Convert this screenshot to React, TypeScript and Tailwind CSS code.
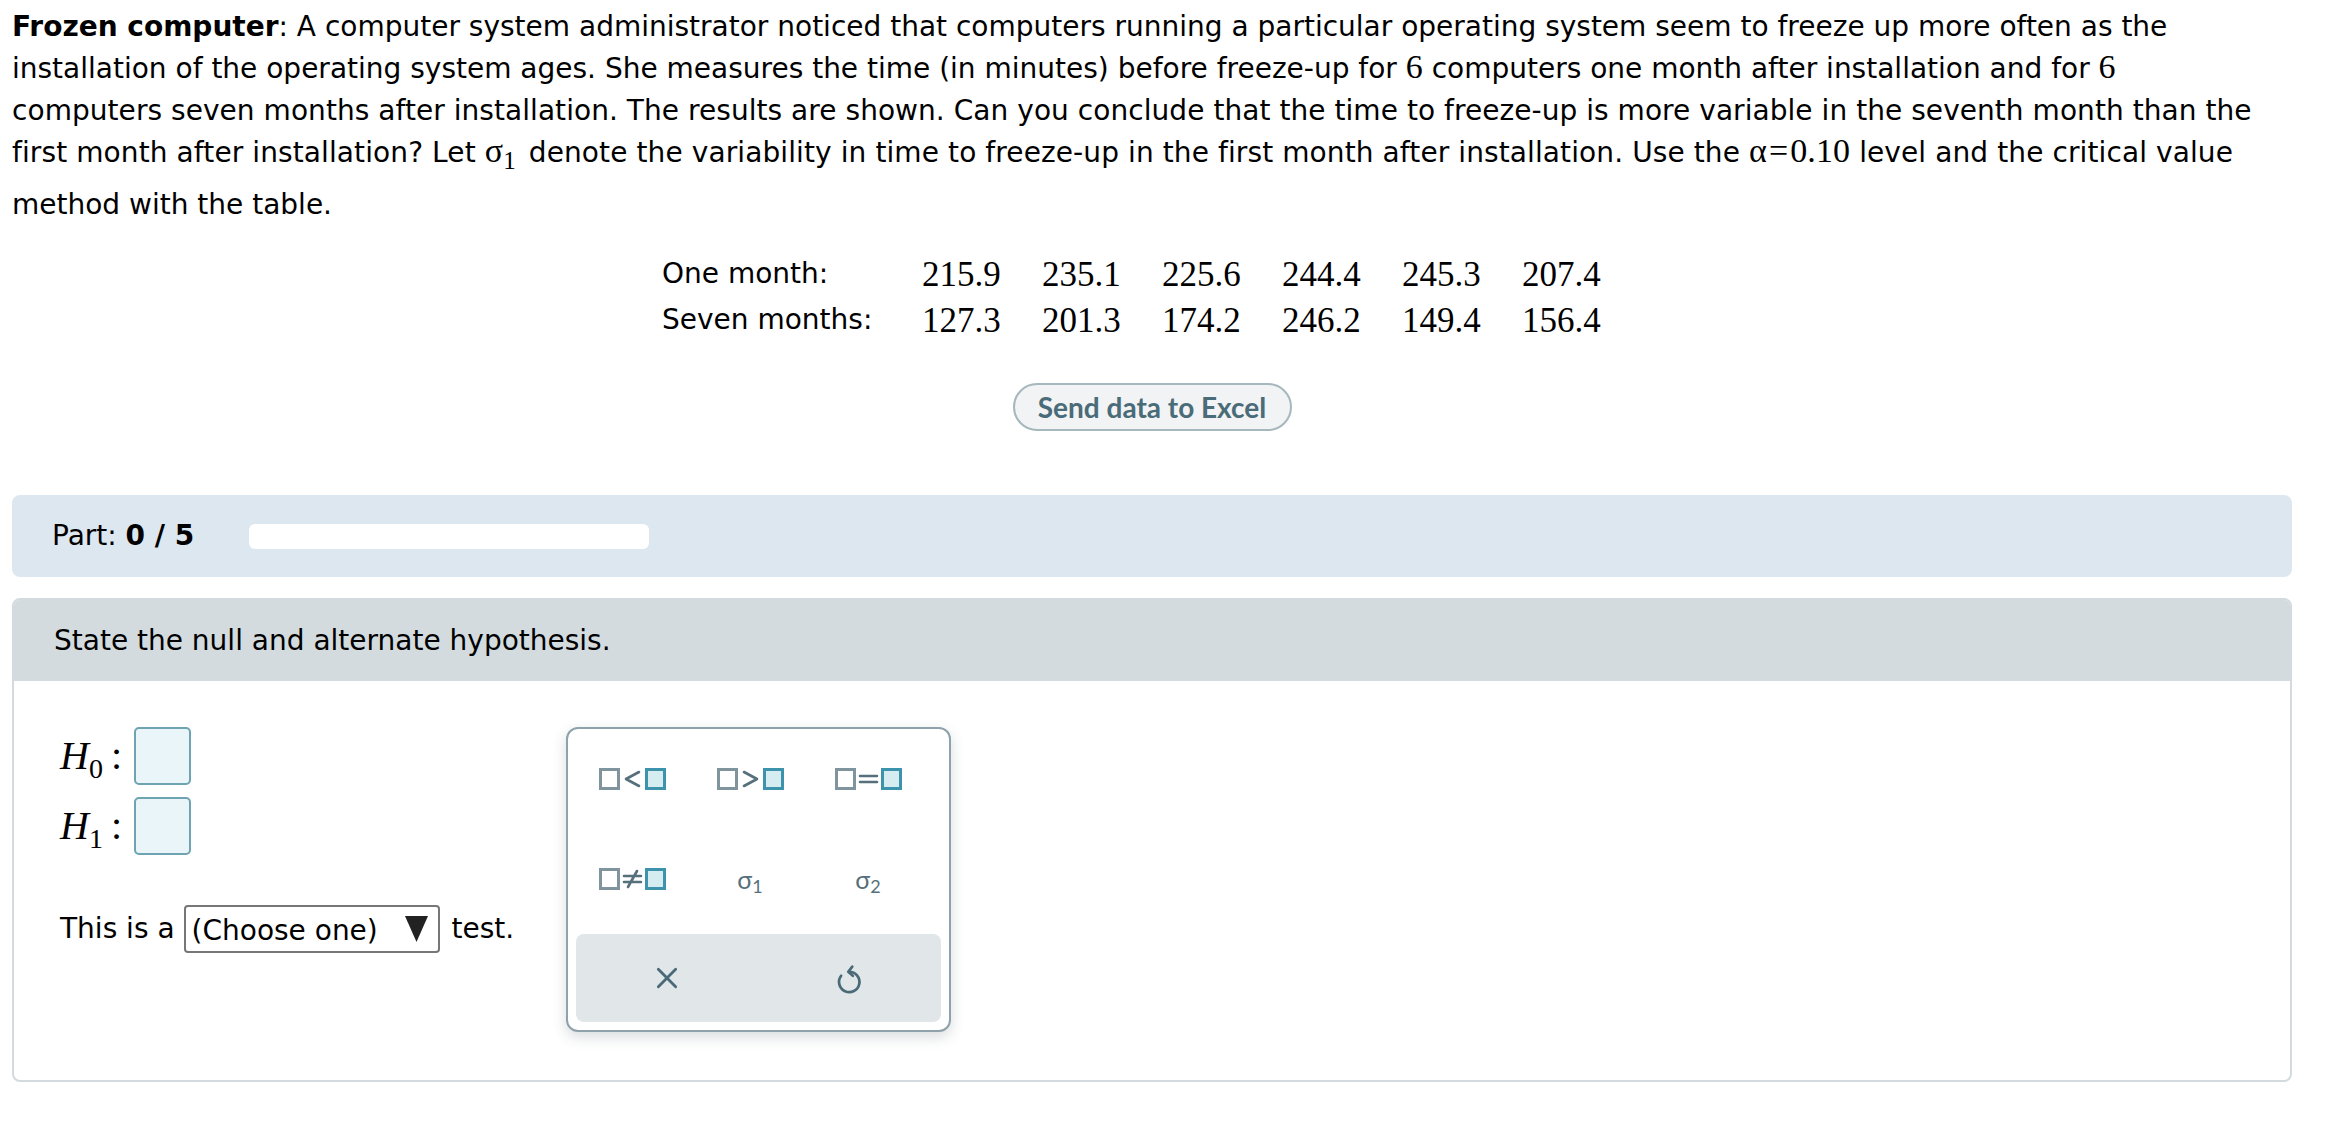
import React from "react";

const serif = "font-['Liberation_Serif','Times_New_Roman',serif]";

function OpIcon({ op }: { op: string }) {
  const c = "#56707b";
  let d = "";
  if (op === "<") d = "M17 4L4 11L17 18";
  if (op === ">") d = "M4 4L17 11L4 18";
  if (op === "=") d = "M2 8H19M2 14H19";
  if (op === "≠") d = "M2 8H19M2 14H19M15 3L6 19";
  return (
    <svg width="21" height="22" viewBox="0 0 21 22" fill="none" stroke={c} strokeWidth="2.6" strokeLinecap="round" strokeLinejoin="round">
      <path d={d} />
    </svg>
  );
}

function Rel({ op }: { op: string }) {
  return (
    <span className="flex items-center gap-[2px]">
      <span className="block w-[21px] h-[22px] border-[3px] border-[#7f949d] bg-white" />
      <OpIcon op={op} />
      <span className="block w-[21px] h-[22px] border-[3px] border-[#3d93ab] bg-[#d5ecf1]" />
    </span>
  );
}

function Sigma({ n }: { n: string }) {
  return (
    <span className="text-[#56707b] font-['Lato',sans-serif] text-[25px] leading-none">
      σ<sub className="text-[18px] relative top-[4px] align-baseline">{n}</sub>
    </span>
  );
}

function HLabel({ n }: { n: string }) {
  return (
    <span className={`${serif} italic text-[40px] leading-none w-[74px] whitespace-nowrap`}>
      H<sub className="not-italic text-[28px] relative top-[9px] align-baseline">{n}</sub>
      <span className="not-italic">&thinsp;:</span>
    </span>
  );
}

export default function App() {
  const one = ["215.9", "235.1", "225.6", "244.4", "245.3", "207.4"];
  const seven = ["127.3", "201.3", "174.2", "246.2", "149.4", "156.4"];
  return (
    <div className="min-h-[1122px] bg-white text-black font-['DejaVu_Sans','Verdana',sans-serif] text-[28px]">
      <div className="w-[2280px] ml-[12px]">
        {/* Problem statement */}
        <div className="pt-[6px] whitespace-nowrap">
          <div className="h-[42px] leading-[42px]">
            <b>Frozen computer</b>: A computer system administrator noticed that computers running a particular operating system seem to freeze up more often as the
          </div>
          <div className="h-[42px] leading-[42px]">
            installation of the operating system ages. She measures the time (in minutes) before freeze-up for{" "}
            <span className={`${serif} text-[34px] leading-none`}>6</span> computers one month after installation and for{" "}
            <span className={`${serif} text-[34px] leading-none`}>6</span>
          </div>
          <div className="h-[42px] leading-[42px] tracking-[0.05px]">
            computers seven months after installation. The results are shown. Can you conclude that the time to freeze-up is more variable in the seventh month than the
          </div>
          <div className="h-[52px] leading-[42px] tracking-[0.1px]">
            first month after installation? Let{" "}
            <span className={`${serif} text-[34px] leading-none mr-[4px]`}>
              σ<sub className="text-[25px] relative top-[7px] align-baseline">1</sub>
            </span>{" "}
            denote the variability in time to freeze-up in the first month after installation. Use the{" "}
            <span className={`${serif} text-[34px] leading-none`}>
              α<span className="mx-[2px]">=</span>0.10
            </span>{" "}
            level and the critical value
          </div>
          <div className="h-[42px] leading-[42px]">method with the table.</div>
        </div>

        {/* Data table */}
        <div className="mt-[25px] mx-auto w-[980px]">
          <div className="flex h-[46px] items-center">
            <div className="w-[260px]">One month:</div>
            {one.map((v) => (
              <div key={v} className={`w-[120px] ${serif} text-[35px] leading-none`}>{v}</div>
            ))}
          </div>
          <div className="flex h-[46px] items-center">
            <div className="w-[260px]">Seven months:</div>
            {seven.map((v) => (
              <div key={v} className={`w-[120px] ${serif} text-[35px] leading-none`}>{v}</div>
            ))}
          </div>
        </div>

        <div className="mt-[40px] flex justify-center">
          <button className="h-[48px] w-[279px] rounded-full border-2 border-[#a7b7be] bg-[#f1f3f5] text-[#4a6b78] font-['Lato',sans-serif] font-bold text-[28px] leading-none">
            Send data to Excel
          </button>
        </div>

        {/* Part bar */}
        <div className="mt-[64px] h-[82px] rounded-[8px] bg-[#dde7ef] flex items-center pl-[40px]">
          <span className="w-[197px] whitespace-nowrap">
            Part: <b>0 / 5</b>
          </span>
          <div className="w-[400px] h-[25px] rounded-[6px] bg-white" />
        </div>

        {/* Question card */}
        <div className="mt-[21px] rounded-[8px] border-2 border-[#d3dbde] overflow-hidden">
          <div className="h-[81px] bg-[#d3dbde] flex items-center pl-[40px]">State the null and alternate hypothesis.</div>
          <div className="flex pl-[46px] pt-[46px] pb-[48px]">
            <div className="w-[506px]">
              <div className="flex items-center h-[58px]">
                <HLabel n="0" />
                <span className="block w-[57px] h-[58px] rounded-[5px] border-2 border-[#6ea3b2] bg-[#eaf5f9]" />
              </div>
              <div className="flex items-center h-[58px] mt-[12px]">
                <HLabel n="1" />
                <span className="block w-[57px] h-[58px] rounded-[5px] border-2 border-[#6ea3b2] bg-[#eaf5f9]" />
              </div>
              <div className="flex items-center h-[48px] mt-[50px] whitespace-nowrap">
                <span>This is a</span>
                <span className="ml-[9px] h-[48px] w-[256px] border-2 border-[#777] rounded-[4px] flex items-center pl-[6px] pt-[4px]">
                  (Choose one)
                  <svg className="ml-[26px] -mt-[4px]" width="25" height="28" viewBox="0 0 25 28">
                    <path d="M1 1H24L12.5 27Z" fill="#222" />
                  </svg>
                </span>
                <span className="ml-[12px]">test.</span>
              </div>
            </div>

            {/* Keypad */}
            <div className="w-[385px] h-[305px] rounded-[12px] border-2 border-[#8fa2ab] bg-white shadow-[0_5px_14px_rgba(40,60,70,0.18)] px-[8px] pb-[8px] flex flex-col">
              <div className="grid grid-cols-[118px_118px_118px] -ml-[3px]">
                <div className="h-[100px] flex items-center justify-center"><Rel op="<" /></div>
                <div className="h-[100px] flex items-center justify-center"><Rel op=">" /></div>
                <div className="h-[100px] flex items-center justify-center"><Rel op="=" /></div>
                <div className="h-[100px] flex items-center justify-center"><Rel op="≠" /></div>
                <div className="h-[100px] flex items-center justify-center"><Sigma n="1" /></div>
                <div className="h-[100px] flex items-center justify-center"><Sigma n="2" /></div>
              </div>
              <div className="mt-auto h-[88px] rounded-[8px] bg-[#e1e6e9] grid grid-cols-2">
                <div className="flex items-center justify-center">
                  <svg width="26" height="26" viewBox="0 0 24 24" fill="none" stroke="#4b6a78" strokeWidth="2.6" strokeLinecap="round">
                    <path d="M4 4L20 20M20 4L4 20" />
                  </svg>
                </div>
                <div className="flex items-center justify-center">
                  <svg width="28" height="34" viewBox="0 0 24 30" fill="none" stroke="#4b6a78" strokeWidth="2.4" strokeLinecap="round" strokeLinejoin="round">
                    <path d="M11 9.5 A9 9 0 1 1 4.2 13" />
                    <path d="M14 5 L10.5 9.5 L14.5 13" />
                  </svg>
                </div>
              </div>
            </div>
          </div>
        </div>
      </div>
    </div>
  );
}
